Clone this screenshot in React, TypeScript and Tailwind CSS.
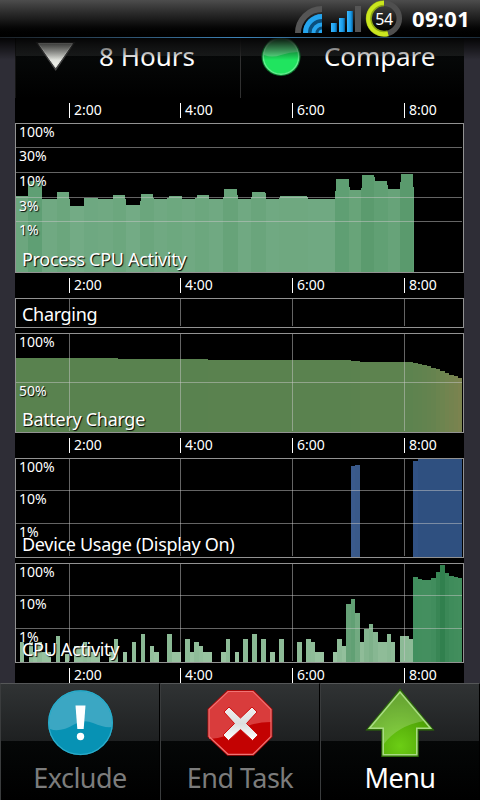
import type { ReactNode } from 'react';
import clsx from 'clsx';

// [x start, x end, top, fill]
type Bar = [number, number, number, string];

interface ChartProps {
  top: number;
  height: number;
  title: string;
  bars?: Bar[];
  levels?: { y: number; label: string }[];
  hours?: boolean;
  className?: string;
}

const LEFT = 15;
const WIDTH = 449;
const HOUR_LINES = [69, 180, 292, 404];

const processBars: Bar[] = [
  [16, 28, 196, '#6ca67e'],
  [28, 42, 181, '#5f9f74'],
  [42, 57, 199, '#70a982'],
  [57, 69, 192, '#6ba67d'],
  [69, 70, 199, '#6ba67d'],
  [70, 84, 206, '#73ab85'],
  [84, 98, 198, '#6ea881'],
  [98, 113, 199, '#70a982'],
  [113, 125, 195, '#6ca77e'],
  [125, 126, 199, '#6ca77e'],
  [126, 140, 205, '#73ab85'],
  [140, 141, 201, '#6ba67d'],
  [141, 153, 194, '#6ba67d'],
  [153, 154, 198, '#6ba67d'],
  [154, 167, 199, '#70a982'],
  [167, 169, 198, '#6da87f'],
  [169, 182, 196, '#6da87f'],
  [182, 195, 199, '#70a982'],
  [195, 197, 198, '#6ca77e'],
  [197, 209, 195, '#6ca77e'],
  [209, 223, 199, '#70a982'],
  [223, 224, 197, '#67a379'],
  [224, 237, 189, '#67a379'],
  [237, 238, 195, '#67a379'],
  [238, 251, 199, '#70a982'],
  [251, 252, 197, '#6aa57c'],
  [252, 265, 192, '#6aa57c'],
  [265, 266, 193, '#6aa57c'],
  [266, 279, 199, '#70a982'],
  [279, 280, 198, '#6fa880'],
  [280, 307, 196, '#6fa880'],
  [307, 308, 197, '#6fa880'],
  [308, 335, 199, '#70a982'],
  [335, 336, 191, '#5f9f73'],
  [336, 349, 179, '#5f9f73'],
  [349, 350, 187, '#68a479'],
  [350, 361, 190, '#68a479'],
  [361, 362, 188, '#5b9b6e'],
  [362, 374, 175, '#5b9b6e'],
  [374, 375, 177, '#61a074'],
  [375, 387, 181, '#61a074'],
  [387, 388, 185, '#61a074'],
  [388, 400, 189, '#67a379'],
  [400, 401, 182, '#5a9a6d'],
  [401, 413, 174, '#5a9a6d'],
  [413, 414, 187, '#5f9f73'],
];

const batteryBars: Bar[] = [
  [16, 118, 358, '#59824f'],
  [118, 208, 359, '#59824f'],
  [208, 351, 360, '#5a824f'],
  [351, 360, 361, '#5b824f'],
  [360, 413, 362, '#5d834f'],
  [413, 418, 363, '#5f834f'],
  [418, 422, 364, '#60834f'],
  [422, 427, 365, '#62834f'],
  [427, 431, 366, '#64834f'],
  [431, 436, 368, '#66834f'],
  [436, 440, 369, '#6a844f'],
  [440, 445, 371, '#6d844f'],
  [445, 449, 373, '#71844f'],
  [449, 454, 375, '#74834f'],
  [454, 458, 376, '#77834f'],
  [458, 462, 378, '#7b834f'],
];

const displayBars: Bar[] = [
  [351, 355, 466, '#3a5a8c'],
  [355, 360, 465, '#395989'],
  [413, 418, 461, '#315285'],
  [418, 462, 459, '#2f5080'],
];

const cpuBars: Bar[] = [
  [20, 24, 642, '#8fbc98'],
  [29, 33, 642, '#8fbc98'],
  [33, 37, 652, '#98c3a0'],
  [37, 42, 642, '#8fbc98'],
  [42, 51, 652, '#98c3a0'],
  [56, 60, 636, '#8cba96'],
  [65, 69, 654, '#98c3a0'],
  [74, 83, 646, '#93bf9c'],
  [83, 87, 642, '#8fbc98'],
  [87, 91, 646, '#93bf9c'],
  [91, 100, 652, '#98c3a0'],
  [109, 114, 652, '#98c3a0'],
  [114, 118, 639, '#8dbb97'],
  [123, 127, 652, '#98c3a0'],
  [132, 136, 642, '#8fbc98'],
  [141, 145, 634, '#8ab994'],
  [150, 154, 646, '#93bf9c'],
  [154, 159, 652, '#98c3a0'],
  [167, 172, 634, '#8ab994'],
  [172, 181, 652, '#98c3a0'],
  [185, 190, 639, '#8dbb97'],
  [190, 194, 652, '#98c3a0'],
  [194, 199, 642, '#8fbc98'],
  [199, 203, 646, '#93bf9c'],
  [203, 212, 652, '#98c3a0'],
  [221, 226, 652, '#98c3a0'],
  [226, 230, 639, '#8dbb97'],
  [235, 239, 652, '#98c3a0'],
  [243, 248, 639, '#8dbb97'],
  [252, 257, 634, '#8ab994'],
  [261, 266, 639, '#8dbb97'],
  [270, 275, 652, '#98c3a0'],
  [279, 284, 639, '#8dbb97'],
  [297, 302, 642, '#8fbc98'],
  [306, 311, 639, '#8dbb97'],
  [311, 315, 642, '#8fbc98'],
  [315, 324, 652, '#98c3a0'],
  [333, 337, 652, '#98c3a0'],
  [337, 342, 639, '#8dbb97'],
  [342, 346, 646, '#93bf9c'],
  [346, 351, 604, '#67a278'],
  [351, 355, 599, '#61a074'],
  [355, 360, 613, '#72aa81'],
  [360, 364, 642, '#8fbc98'],
  [364, 369, 629, '#84b58f'],
  [369, 373, 624, '#7eb18a'],
  [373, 378, 632, '#87b792'],
  [378, 387, 642, '#8fbc98'],
  [387, 391, 634, '#8ab994'],
  [391, 395, 642, '#8fbc98'],
  [400, 409, 636, '#8cba96'],
  [409, 413, 639, '#8dbb97'],
  [413, 418, 577, '#418f5e'],
  [418, 422, 579, '#438f5e'],
  [422, 431, 580, '#448f5f'],
  [431, 436, 578, '#418d5d'],
  [436, 440, 572, '#398655'],
  [440, 445, 565, '#31804e'],
  [445, 449, 573, '#3b8857'],
  [449, 454, 576, '#3f8c5b'],
  [454, 458, 577, '#418d5c'],
  [458, 462, 578, '#428e5d'],
];

function Chart({ top, height, title, bars = [], levels = [], hours = true, className }: ChartProps) {
  const bottom = top + height - 1;

  return (
    <div className={clsx('relative ml-[15px] w-[449px] shrink-0 bg-black', className)}>
      <svg
        width={WIDTH}
        height={height}
        viewBox={`${LEFT} ${top} ${WIDTH} ${height}`}
        shapeRendering="crispEdges"
        className="block"
      >
        {bars.map(([x1, x2, y, fill]) => (
          <rect key={x1} x={x1} y={y} width={x2 - x1} height={bottom - y} fill={fill} />
        ))}
        {levels.slice(1).map(({ y }) => (
          <rect key={y} x={16} y={y} width={446} height={1} fill="#c8c8c8" opacity={0.5} />
        ))}
        {hours &&
          HOUR_LINES.map((x) => (
            <rect key={x} x={x} y={top + 1} width={1} height={height - 3} fill="#c8c8c8" opacity={0.5} />
          ))}
        <rect x={LEFT + 0.5} y={top + 0.5} width={WIDTH - 1} height={height - 1} fill="none" stroke="#929292" />
      </svg>
      {levels.map(({ y, label }) => (
        <span
          key={label}
          className="absolute left-1 text-[14px] leading-[14px] text-white [text-shadow:1px_1px_1px_#000]"
          style={{ top: y - top + 2 }}
        >
          {label}
        </span>
      ))}
      <span className="absolute bottom-[5px] left-[7px] whitespace-nowrap text-[18px] leading-[18px] tracking-[-0.31px] text-white [text-shadow:1px_1px_1px_#000]">
        {title}
      </span>
    </div>
  );
}

function TimeAxis({ last = false }: { last?: boolean }) {
  return (
    <div className={clsx('ml-[15px] flex w-[449px] shrink-0 bg-black pt-[5px] pl-[54px]', last ? 'h-[20px]' : 'h-[25px]')}>
      {['2:00', '4:00', '6:00', '8:00'].map((label, i) => (
        <div
          key={label}
          className={clsx(
            'h-[15px] border-l border-white pl-1 text-[14px] leading-[13px] text-white',
            i === 0 ? 'w-[111px]' : i === 3 ? 'w-[59px]' : 'w-[112px]',
          )}
        >
          {label}
        </div>
      ))}
    </div>
  );
}

function StatusBar() {
  return (
    <header className="flex h-[38px] shrink-0 flex-col bg-gradient-to-b from-[#4d4d4d] via-[#1c1c1c] via-50% to-black">
      <div className="flex h-[37px] items-start pl-[294px]">
        {/* Wifi */}
        <svg width="30" height="36" viewBox="294 0 30 36" fill="none">
          <path d="M298 33A24 24 0 0 1 322 9" stroke="#555" strokeWidth="6" />
          <path d="M303 33A19 19 0 0 1 322 14V33Z" fill="#0b4f7c" />
          <path d="M305.500 33A16.500 16.500 0 0 1 322 16.500" stroke="#25a5ee" strokeWidth="5" />
          <path d="M313.500 33A8.500 8.500 0 0 1 322 24.500" stroke="#25a5ee" strokeWidth="4" />
          <path d="M318.500 33A3.500 3.500 0 0 1 322 29.500V33Z" fill="#25a5ee" />
        </svg>
        {/* Signal */}
        <svg width="40" height="36" viewBox="324 0 40 36">
          <defs>
            <linearGradient id="signal" x1="0" x2="1">
              <stop offset="0" stopColor="#3ab8ff" />
              <stop offset="0.65" stopColor="#179ae8" />
              <stop offset="1" stopColor="#0b568a" />
            </linearGradient>
          </defs>
          <rect x="331" y="23" width="6" height="9" fill="url(#signal)" />
          <rect x="339" y="18" width="6" height="14" fill="url(#signal)" />
          <rect x="347" y="11" width="6" height="21" fill="url(#signal)" />
          <rect x="355" y="6" width="6" height="26" fill="#555" />
        </svg>
        {/* Battery ring */}
        <div className="relative flex h-[37px] w-[40px] items-center justify-center">
          <svg width="40" height="37" viewBox="364 0 40 37" fill="none" className="absolute inset-0">
            <circle cx="384" cy="18.500" r="15.300" stroke="#4f4f4f" strokeWidth="5.500" />
            <path d="M384 3.200A15.300 15.300 0 1 0 388 33.300" stroke="#8da812" strokeWidth="6" />
            <path d="M384 2.700A15.800 15.800 0 1 0 388 33.800" stroke="#cbe61f" strokeWidth="4" />
          </svg>
          <span className="relative text-[16px] leading-none tracking-[-0.5px] text-white">54</span>
        </div>
        <span className="ml-[8px] mt-[6px] text-[22px] font-bold leading-[24px] tracking-[0.3px] text-white">09:01</span>
      </div>
      <div className="h-px bg-gradient-to-r from-[#1b2126] via-[#3c83b8] to-[#1b2b38]" />
    </header>
  );
}

function Toolbar() {
  return (
    <div className="relative ml-[15px] flex h-[60px] w-[449px] shrink-0 bg-black">
      <div className="flex h-full w-[225px] border-l border-[#151515] bg-[linear-gradient(#282a2b_0,#1b1d1d_18px,#060808_18px,#000_60px)]">
        <svg width="66" height="42" viewBox="16 38 66 42">
          <defs>
            <linearGradient id="drop" x1="0" x2="0" y1="0" y2="1">
              <stop offset="0" stopColor="#b8bab5" />
              <stop offset="1" stopColor="#f4f6f0" />
            </linearGradient>
          </defs>
          <path d="M35.500 42H75.500L55.700 71Z" fill="#444" />
          <path d="M38.500 43.500H72.500L55.600 67.500Z" fill="url(#drop)" stroke="#e9ebe6" strokeWidth="1" />
        </svg>
        <span className="ml-[17px] mt-[3px] text-[26px] leading-[30px] text-white">8 Hours</span>
      </div>
      <div className="flex h-full w-[224px] border-l border-[#303030] bg-[linear-gradient(#282a2b_0,#1b1d1d_18px,#060808_18px,#000_60px)]">
        <svg width="66" height="42" viewBox="241 38 66 42">
          <circle cx="281" cy="56.500" r="19.500" fill="#0c7a2f" />
          <circle cx="281" cy="56.500" r="17.700" fill="#20e45f" stroke="#64ee8f" strokeWidth="1.400" />
          <path d="M264 55A17 17 0 0 1 298 52Q290 52 281 55Q272 58 264 55Z" fill="#fff" opacity="0.28" />
        </svg>
        <span className="ml-[17px] mt-[3px] text-[26px] leading-[30px] tracking-[-0.1px] text-white">Compare</span>
      </div>
    </div>
  );
}

function ExcludeIcon() {
  return (
    <svg width="68" height="70" viewBox="46 688 68 70">
      <circle cx="80.500" cy="722.700" r="32.500" fill="#0792b4" />
      <path
        d="M49.300 727A31.500 31.500 0 1 1 111.700 727Q104 728 93 723Q84 719 75 724Q60 733 50 729Z"
        fill="#3ba7c3"
      />
      <circle cx="80.500" cy="722.700" r="31.800" fill="none" stroke="#2dacca" strokeWidth="1.200" />
      <path d="M75.500 705.500H85.500L83.700 729H77.300Z" fill="#fff" />
      <circle cx="80.500" cy="736.500" r="3.700" fill="#fff" />
    </svg>
  );
}

function EndTaskIcon() {
  return (
    <svg width="68" height="70" viewBox="206 688 68 70">
      <defs>
        <linearGradient id="cross" x1="0" x2="0" y1="0" y2="1">
          <stop offset="0" stopColor="#f0f0f0" />
          <stop offset="0.5" stopColor="#dcdfe0" />
          <stop offset="1" stopColor="#fff" />
        </linearGradient>
      </defs>
      <path d="M227.300 690H253.700L272.500 709V737L253.700 755.700H227.300L207.500 737V709Z" fill="#a90909" />
      <path d="M228 691.500H253L271 709.500V736.500L253 754.300H228L209 736.500V709.500Z" fill="#c30202" />
      <path d="M228 691.500H253L271 709.500V722Q257 722 248 726Q228 738 209 739V709.500Z" fill="#d93c3c" />
      <path
        d="M228 691.500H253L271 709.500V736.500L253 754.300H228L209 736.500V709.500Z"
        fill="none"
        stroke="#ef7474"
        strokeWidth="1.200"
      />
      <path
        d="M229 707L240.500 718L252 707L257 712L246.500 723.500L258 735L252.500 740.500L240.500 729.500L228.500 740.500L223 735L234.500 723.500L224 712Z"
        fill="url(#cross)"
        stroke="#cf0e0e"
        strokeWidth="1"
      />
    </svg>
  );
}

function MenuIcon() {
  return (
    <svg width="70" height="70" viewBox="365 688 70 70">
      <defs>
        <radialGradient id="arrow" cx="400" cy="746" r="45" gradientUnits="userSpaceOnUse">
          <stop offset="0" stopColor="#6ccd15" />
          <stop offset="1" stopColor="#449400" />
        </radialGradient>
      </defs>
      <path d="M400 688.500L434.500 730.500H418.700V757H381.300V730.500H365.500Z" fill="#2d6c08" />
      <path d="M400 692L430.500 728.300H416.800V754.800H383.200V728.300H369.500Z" fill="url(#arrow)" />
      <path d="M400 692L424 721Q397 726 384 744V728.300H369.500Z" fill="#fff" opacity="0.2" />
      <path
        d="M400 692L430.500 728.300H416.800V754.800H383.200V728.300H369.500Z"
        fill="none"
        stroke="#a9dc82"
        strokeWidth="1.600"
      />
    </svg>
  );
}

function ActionButton({ icon, label, active = false }: { icon: ReactNode; label: string; active?: boolean }) {
  return (
    <button className="flex h-full w-[160px] flex-col items-center border-t border-l border-r border-t-[#555758] border-l-[#3a3c3d] border-r-black bg-[linear-gradient(#303334_0,#1e2021_57px,#050707_57px,#000_116px)] pt-[4px]">
      {icon}
      <span
        className={clsx(
          'mt-[3px] text-[27px] leading-[34px] tracking-[-0.55px]',
          active ? 'text-white' : 'text-[#7c7c7c]',
        )}
      >
        {label}
      </span>
    </button>
  );
}

export default function App() {
  return (
    <div className="flex h-[800px] w-[480px] flex-col overflow-hidden bg-[#2e2d36] font-['Noto_Sans','Open_Sans',sans-serif]">
      <StatusBar />

      <main className="relative flex h-[645px] shrink-0 flex-col overflow-hidden">
        <Toolbar />
        <TimeAxis />
        <Chart
          top={123}
          height={150}
          title="Process CPU Activity"
          bars={processBars}
          hours={false}
          levels={[
            { y: 123, label: '100%' },
            { y: 147, label: '30%' },
            { y: 172, label: '10%' },
            { y: 197, label: '3%' },
            { y: 221, label: '1%' },
          ]}
        />
        <TimeAxis />
        <Chart top={298} height={30} title="Charging" />
        <div className="ml-[15px] h-[5px] w-[449px] shrink-0 bg-black" />
        <Chart
          top={333}
          height={100}
          title="Battery Charge"
          bars={batteryBars}
          levels={[
            { y: 333, label: '100%' },
            { y: 382, label: '50%' },
          ]}
        />
        <TimeAxis />
        <Chart
          top={458}
          height={100}
          title="Device Usage (Display On)"
          bars={displayBars}
          levels={[
            { y: 458, label: '100%' },
            { y: 490, label: '10%' },
            { y: 523, label: '1%' },
          ]}
        />
        <div className="ml-[15px] h-[5px] w-[449px] shrink-0 bg-black" />
        <Chart
          top={563}
          height={100}
          title="CPU Activity"
          bars={cpuBars}
          levels={[
            { y: 563, label: '100%' },
            { y: 595, label: '10%' },
            { y: 628, label: '1%' },
          ]}
        />
        <TimeAxis last />

        {/* Shadow cast by the status bar */}
        <div className="pointer-events-none absolute inset-x-0 top-0 h-[22px] bg-gradient-to-b from-black/90 to-transparent" />
      </main>

      <nav className="flex h-[117px] shrink-0">
        <ActionButton icon={<ExcludeIcon />} label="Exclude" />
        <ActionButton icon={<EndTaskIcon />} label="End Task" />
        <ActionButton icon={<MenuIcon />} label="Menu" active />
      </nav>
    </div>
  );
}
